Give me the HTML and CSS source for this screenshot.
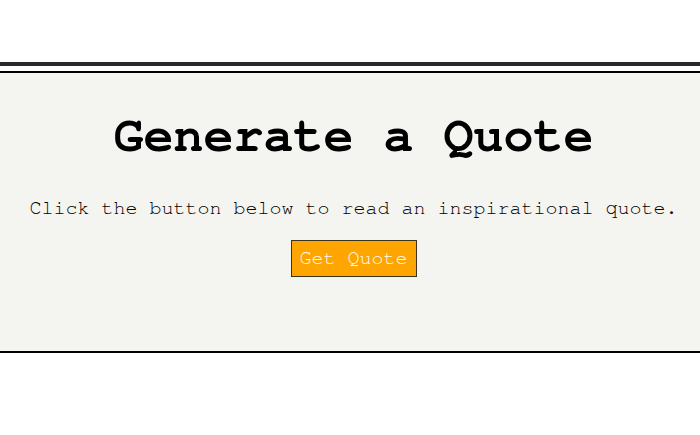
FILE: index.html
```html
<!DOCTYPE html>
<html lang="en">
<head>
<meta charset="utf-8">
<title>Generate a Quote</title>
<link rel="stylesheet" href="styles.css">
</head>
<body>
<header class="topbar"></header>
<main class="panel">
  <h1 class="title">Generate a Quote</h1>
  <p class="lead">Click the button below to read an inspirational quote.</p>
  <button class="btn" type="button">Get Quote</button>
</main>
</body>
</html>
```
FILE: styles.css
```css
html, body {
  margin: 0;
  padding: 0;
  background: #ffffff;
}
body {
  font-family: FreeMono, "Courier New", monospace;
  color: #111;
}
.topbar {
  height: 62px;
  border-bottom: 4px solid #2a2a2e;
}
.panel {
  margin-top: 5px;
  border-top: 2px solid #000;
  border-bottom: 2px solid #000;
  background: #f4f4f0;
  display: flex;
  flex-direction: column;
  align-items: center;
  padding: 35px 0 74px 7px;
}
.title {
  margin: 0;
  font-size: 50px;
  font-weight: bold;
  line-height: 57px;
  color: #000;
}
.lead {
  margin: 32px 0 0;
  font-size: 20px;
  line-height: 23px;
  color: #000;
}
.btn {
  margin-top: 20px;
  font-family: FreeMono, "Courier New", monospace;
  font-size: 20px;
  line-height: 23px;
  padding: 6px 8px;
  background: #ffa500;
  color: #fffdf0;
  border: 1px solid #3a3320;
  border-radius: 0;
}
```
